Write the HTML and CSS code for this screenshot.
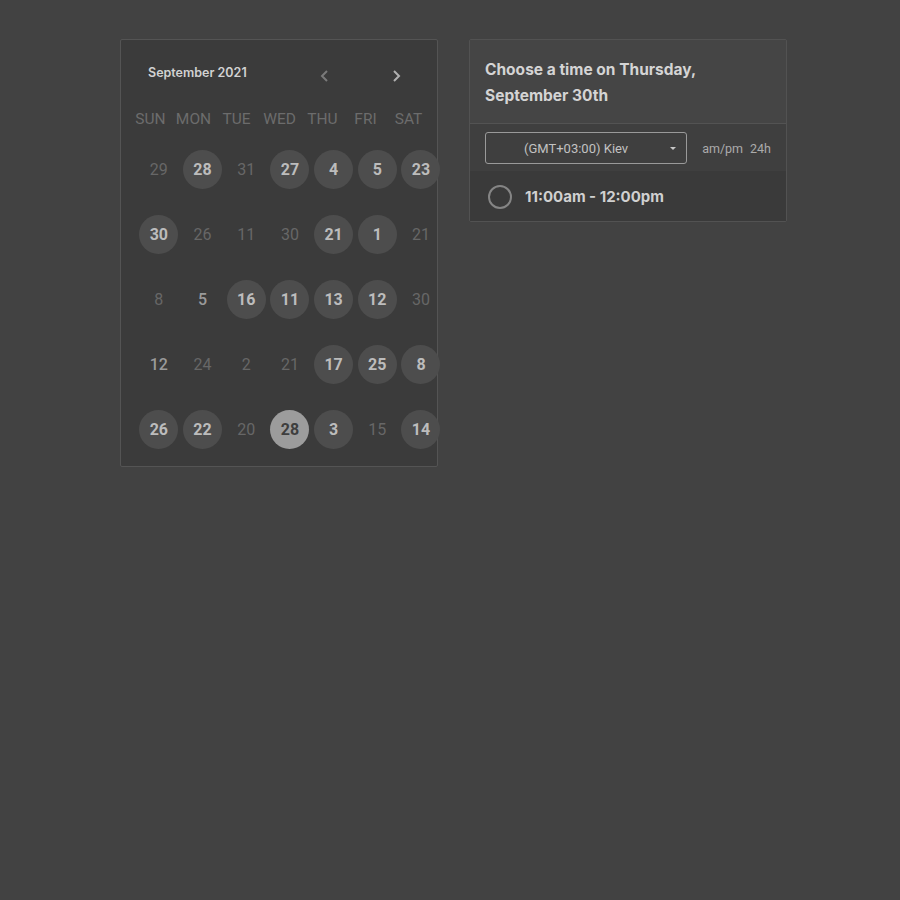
FILE: index.html
```html
<!DOCTYPE html>
<html>
<head>
<meta charset="utf-8">
<link rel="stylesheet" href="styles.css">
</head>
<body>
<div class="page">
  <div class="cal">
    <div class="cal-head">
      <div class="month">September 2021</div>
      <div class="navs">
        <svg class="nav" width="14" height="14" viewBox="0 0 14 14"><path d="M9 2 L4 7 L9 12" fill="none" stroke="#7a7a7a" stroke-width="2"/></svg>
        <svg class="nav" width="14" height="14" viewBox="0 0 14 14"><path d="M5 2 L10 7 L5 12" fill="none" stroke="#b0b0b0" stroke-width="2"/></svg>
      </div>
    </div>
    <div class="dow">
      <span>SUN</span><span>MON</span><span>TUE</span><span>WED</span><span>THU</span><span>FRI</span><span>SAT</span>
    </div>
    <div class="days">
      <span class="d off">29</span><span class="d av">28</span><span class="d off">31</span><span class="d av">27</span><span class="d av">4</span><span class="d av">5</span><span class="d av">23</span>
      <span class="d av">30</span><span class="d off">26</span><span class="d off">11</span><span class="d off">30</span><span class="d av">21</span><span class="d av">1</span><span class="d off">21</span>
      <span class="d off">8</span><span class="d mid">5</span><span class="d av">16</span><span class="d av">11</span><span class="d av">13</span><span class="d av">12</span><span class="d off">30</span>
      <span class="d mid">12</span><span class="d off">24</span><span class="d off">2</span><span class="d off">21</span><span class="d av">17</span><span class="d av">25</span><span class="d av">8</span>
      <span class="d av">26</span><span class="d av">22</span><span class="d off">20</span><span class="d sel">28</span><span class="d av">3</span><span class="d off">15</span><span class="d av">14</span>
    </div>
  </div>
  <div class="times">
    <div class="t-head">Choose a time on Thursday, September 30th</div>
    <div class="t-controls">
      <div class="select">(GMT+03:00) Kiev<span class="caret"></span></div>
      <div class="fmt"><span>am/pm</span><span>24h</span></div>
    </div>
    <div class="slot">
      <span class="radio"></span>
      <span class="slot-text">11:00am - 12:00pm</span>
    </div>
  </div>
</div>
</body>
</html>
```
FILE: styles.css
```css
html, body {
  margin: 0;
  padding: 0;
  background: #424242;
  width: 900px;
  height: 900px;
  overflow: hidden;
}
.page {
  display: flex;
  align-items: flex-start;
  gap: 31px;
  padding: 39px 0 0 120px;
  font-family: Roboto, "Liberation Sans", sans-serif;
}
.cal {
  width: 316px;
  height: 426px;
  background: #3b3b3b;
  border: 1px solid #545454;
  border-radius: 2px;
  box-sizing: content-box;
}
.cal-head {
  display: flex;
  align-items: center;
  height: 36px;
  padding: 18px 0 0 27px;
}
.month {
  font-family: Inter, "Noto Sans", sans-serif;
  font-weight: 600;
  font-size: 12.5px;
  color: #d2d2d2;
  width: 170px;
  margin-top: -7px;
}
.navs {
  display: flex;
  gap: 57px;
  margin-left: 0;
}
.nav { display: block; }
.dow {
  display: grid;
  grid-template-columns: repeat(7, 43px);
  margin: 5px 0 0 8px;
  height: 39px;
  align-items: center;
  font-size: 15.5px;
  color: #6c6c6c;
}
.dow span { text-align: center; }
.days {
  display: grid;
  grid-template-columns: repeat(7, 43.7px);
  grid-auto-rows: 65px;
  margin: -1px 0 0 16px;
  align-items: center;
  justify-items: center;
}
.d {
  width: 39px;
  height: 39px;
  border-radius: 50%;
  display: flex;
  align-items: center;
  justify-content: center;
  font-size: 16px;
}
.off { color: #676767; }
.mid { color: #9a9a9a; font-weight: 500; }
.av { background: #4d4d4d; color: #bcbcbc; font-weight: 700; }
.sel { background: #9c9c9c; color: #3e3e3e; font-weight: 700; }

.times {
  width: 316px;
  background: #3c3c3c;
  border: 1px solid #525252;
  border-radius: 2px;
}
.t-head {
  background: #454545;
  padding: 17px 60px 15px 15px;
  font-family: Inter, "Noto Sans", sans-serif;
  font-weight: 700;
  font-size: 15.5px;
  line-height: 25.5px;
  color: #d4d4d4;
  border-bottom: 1px solid #535353;
}
.t-controls {
  display: flex;
  align-items: center;
  padding: 8px 15px 7px 15px;
  background: #3f3f3f;
}
.select {
  position: relative;
  width: 203px;
  height: 32px;
  border: 1px solid #9a9a9a;
  border-radius: 3px;
  box-sizing: border-box;
  display: flex;
  align-items: center;
  padding-left: 38px;
  font-size: 13px;
  color: #c2c2c2;
}
.caret {
  position: absolute;
  right: 10px;
  top: 14px;
  width: 0;
  height: 0;
  border-left: 3px solid transparent;
  border-right: 3px solid transparent;
  border-top: 3px solid #c8c8c8;
}
.fmt {
  display: flex;
  gap: 7px;
  margin-left: 15px;
  font-size: 12.5px;
  color: #ababab;
}
.slot {
  display: flex;
  align-items: center;
  height: 50px;
  padding-left: 18px;
  background: #3a3a3a;
}
.radio {
  width: 20px;
  height: 20px;
  border: 2px solid #858585;
  border-radius: 50%;
  margin-right: 13px;
  margin-top: 1px;
}
.slot-text {
  font-family: Inter, "Noto Sans", sans-serif;
  font-weight: 700;
  font-size: 15px;
  color: #d0d0d0;
  margin-top: 0;
}
```
